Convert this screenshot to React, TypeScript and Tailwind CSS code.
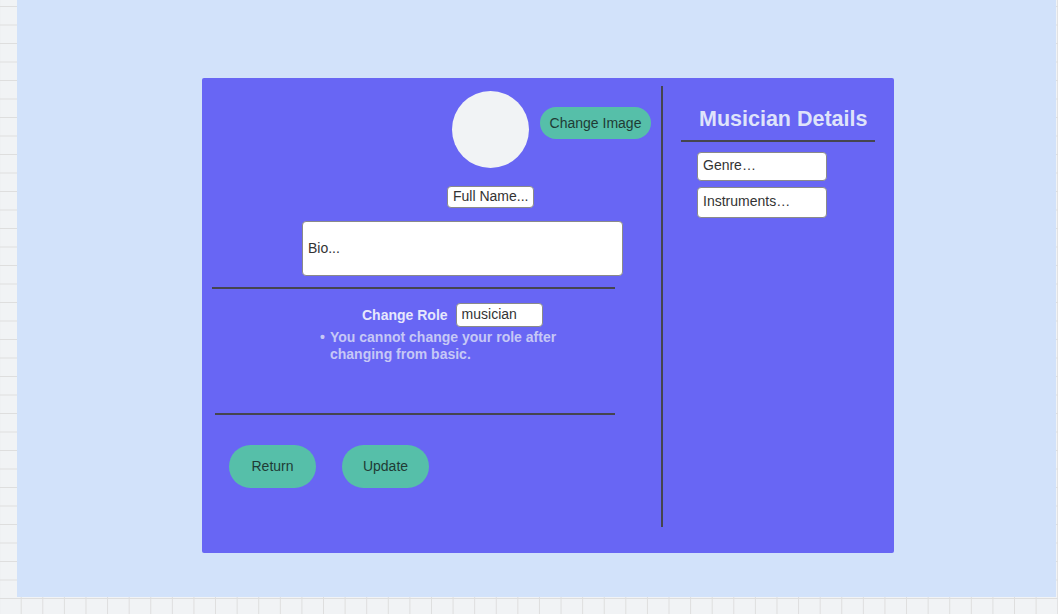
import React from 'react';

export default function App() {
  const inputCls =
    "bg-white border border-[#8a8a8a] rounded-[4px] text-[14px] text-[#333] px-[5px] outline-none placeholder:text-[#333]";

  return (
    <div className="w-[1058px] h-[614px] overflow-hidden bg-[#f1f3f5] bg-[linear-gradient(to_right,#dedede_1px,transparent_1px),linear-gradient(to_bottom,#dedede_1px,transparent_1px)] bg-[size:21.6px_18.5px] bg-[position:-0.9px_6px] font-['Liberation_Sans',Arial,sans-serif]">
      <div className="ml-[17px] w-[1039px] h-[597px] bg-[#d2e2fa] pt-[78px]">
        <div className="ml-[185px] w-[692px] h-[475px] bg-[#6866f4] rounded-[2px] flex">
          {/* left column */}
          <div className="w-[459px] flex flex-col">
            <div className="flex pt-[13px] pl-[250px]">
              <div className="w-[77px] h-[77px] rounded-full bg-[#f1f3f5]" />
              <button className="ml-[11px] mt-[16px] w-[111px] h-[32px] rounded-full bg-[#56bfa9] text-[14px] text-[#1f3b35]">
                Change Image
              </button>
            </div>
            <input
              className={`${inputCls} mt-[18px] ml-[245px] w-[87px] h-[22px] pb-[2px]`}
              placeholder="Full Name..."
            />
            <textarea
              className={`${inputCls} mt-[13px] ml-[100px] w-[321px] h-[55px] resize-none pt-[16px]`}
              placeholder="Bio..."
            />
            <div className="mt-[11px] ml-[10px] w-[403px] h-[2px] bg-[#45454f]" />
            <div className="mt-[14px] ml-[160px] flex items-center">
              <span className="text-[14px] font-bold text-[#e6e8fc]">Change Role</span>
              <input
                className={`${inputCls} ml-[8px] w-[87px] h-[24px] pb-[2px]`}
                defaultValue="musician"
              />
            </div>
            <div className="mt-[2px] ml-[118px] flex text-[14px] leading-[17px] font-bold text-[#c6c8f6]">
              <span className="w-[10px]">•</span>
              <span className="w-[236px]">You cannot change your role after changing from basic.</span>
            </div>
            <div className="mt-[50px] ml-[13px] w-[400px] h-[2px] bg-[#45454f]" />
            <div className="mt-[30px] ml-[27px] flex gap-[26px]">
              <button className="w-[87px] h-[43px] rounded-full bg-[#56bfa9] text-[14px] text-[#1f3b35]">
                Return
              </button>
              <button className="w-[87px] h-[43px] rounded-full bg-[#56bfa9] text-[14px] text-[#1f3b35]">
                Update
              </button>
            </div>
          </div>

          {/* divider */}
          <div className="w-[2px] mt-[8px] h-[441px] bg-[#45454f]" />

          {/* right column */}
          <div className="flex-1 flex flex-col">
            <h2 className="mt-[28px] ml-[36px] text-[21.5px] leading-[26px] font-bold text-[#dfe3fa]">
              Musician Details
            </h2>
            <div className="mt-[8px] ml-[18px] w-[194px] h-[2px] bg-[#45454f]" />
            <input
              className={`${inputCls} mt-[10px] ml-[34px] w-[130px] h-[29px] pb-[3px]`}
              placeholder="Genre…"
            />
            <input
              className={`${inputCls} mt-[6px] ml-[34px] w-[130px] h-[31px] pb-[3px]`}
              placeholder="Instruments…"
            />
          </div>
        </div>
      </div>
    </div>
  );
}
